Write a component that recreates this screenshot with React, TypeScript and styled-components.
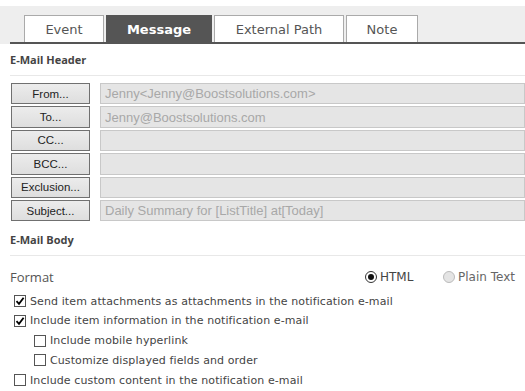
import React from "react";
import styled, { createGlobalStyle } from "styled-components";

const Global = createGlobalStyle`
  body {
    margin: 0;
    background: #fff;
    font-family: "DejaVu Sans", Verdana, sans-serif;
    color: #444;
  }
`;

const Page = styled.div`
  width: 525px;
  overflow: hidden;
  padding-top: 6px;
`;

const TabBand = styled.div`
  background: #eeeeee;
  padding-left: 10px;
`;

const TabStrip = styled.div`
  display: flex;
  gap: 2px;
  padding: 9px 0 0 14px;
  border-bottom: 2px solid #555;
`;

const Tab = styled.div<{ $w: number; $active?: boolean }>`
  width: ${(p) => p.$w}px;
  height: 27px;
  box-sizing: border-box;
  display: flex;
  align-items: center;
  justify-content: center;
  font-size: 13px;
  border: 1px solid ${(p) => (p.$active ? "#555" : "#aaa")};
  border-bottom: none;
  background: ${(p) => (p.$active ? "#555" : "#fff")};
  color: ${(p) => (p.$active ? "#fff" : "#555")};
  font-weight: ${(p) => (p.$active ? "bold" : "normal")};
  padding-top: 1px;
`;

const Section = styled.div`
  padding-left: 10px;
`;

const SectionTitle = styled.div<{ $top: number }>`
  font-family: "Open Sans", sans-serif;
  font-weight: bold;
  font-size: 11px;
  color: #444;
  padding-top: ${(p) => p.$top}px;
  height: 22px;
  border-bottom: 1px solid #e8e8e8;
  line-height: 14px;
`;

const Fields = styled.div`
  display: flex;
  flex-direction: column;
  gap: 2px;
  padding: 7px 0 0 1px;
`;

const FieldRow = styled.div`
  display: flex;
  gap: 10px;
  height: 21.4px;
`;

const PickButton = styled.div`
  width: 79px;
  flex: none;
  box-sizing: border-box;
  border: 1px solid #707070;
  background: linear-gradient(#ececec, #dedede);
  font-family: "Liberation Sans", Arial, sans-serif;
  font-size: 11.5px;
  color: #222;
  display: flex;
  align-items: center;
  justify-content: center;
`;

const FieldInput = styled.div`
  flex: 1;
  box-sizing: border-box;
  border: 1px solid #c8c8c8;
  background: #e5e5e5;
  font-family: "Liberation Sans", Arial, sans-serif;
  font-size: 13px;
  color: #a8a8a8;
  display: flex;
  align-items: center;
  padding-left: 4px;
  white-space: nowrap;
`;

const FormatRow = styled.div`
  display: flex;
  align-items: center;
  height: 20px;
  margin-top: 11px;
`;

const FormatLabel = styled.div`
  font-family: "Open Sans", sans-serif;
  font-size: 13px;
  color: #555;
  flex: 1;
`;

const RadioOption = styled.div<{ $w: number; $disabled?: boolean }>`
  width: ${(p) => p.$w}px;
  display: flex;
  align-items: center;
  gap: 3px;
  font-size: 12px;
  color: ${(p) => (p.$disabled ? "#666" : "#444")};
`;

const RadioDot = styled.span<{ $on?: boolean }>`
  width: 12px;
  height: 12px;
  border-radius: 50%;
  box-sizing: border-box;
  border: 1px solid ${(p) => (p.$on ? "#333" : "#bbb")};
  background: ${(p) => (p.$on ? "#fff" : "#e4e4e4")};
  display: flex;
  align-items: center;
  justify-content: center;
  &::after {
    content: "";
    width: 6px;
    height: 6px;
    border-radius: 50%;
    background: ${(p) => (p.$on ? "#111" : "transparent")};
  }
`;

const Checks = styled.div`
  display: flex;
  flex-direction: column;
  padding-top: 4px;
`;

const CheckRow = styled.div<{ $indent?: boolean }>`
  display: flex;
  align-items: center;
  gap: 4px;
  height: 19.75px;
  padding-left: ${(p) => (p.$indent ? 24 : 4)}px;
  font-size: 11px;
  letter-spacing: 0.1px;
  color: #444;
  white-space: nowrap;
`;

const Box = styled.span`
  width: 12px;
  height: 12px;
  flex: none;
  box-sizing: border-box;
  border: 1px solid #555;
  background: #fff;
  display: flex;
  align-items: center;
  justify-content: center;
`;

const Tick = () => (
  <svg width="10" height="10" viewBox="0 0 10 10">
    <path d="M1.5 5.2 L4 7.8 L8.6 1.8" fill="none" stroke="#000" strokeWidth="1.8" />
  </svg>
);

const Check: React.FC<{ on?: boolean; indent?: boolean; children: React.ReactNode }> = ({ on, indent, children }) => (
  <CheckRow $indent={indent}>
    <Box>{on && <Tick />}</Box>
    {children}
  </CheckRow>
);

const tabs = [
  { label: "Event", w: 80 },
  { label: "Message", w: 106, active: true },
  { label: "External Path", w: 130 },
  { label: "Note", w: 72 },
];

const fields = [
  { btn: "From...", value: "Jenny<Jenny@Boostsolutions.com>" },
  { btn: "To...", value: "Jenny@Boostsolutions.com" },
  { btn: "CC...", value: "" },
  { btn: "BCC...", value: "" },
  { btn: "Exclusion...", value: "" },
  { btn: "Subject...", value: "Daily Summary for [ListTitle] at[Today]" },
];

export default function App() {
  return (
    <Page>
      <Global />
      <TabBand>
        <TabStrip>
          {tabs.map((t) => (
            <Tab key={t.label} $w={t.w} $active={t.active}>
              {t.label}
            </Tab>
          ))}
        </TabStrip>
      </TabBand>
      <Section>
        <SectionTitle $top={9}>E-Mail Header</SectionTitle>
        <Fields>
          {fields.map((f) => (
            <FieldRow key={f.btn}>
              <PickButton>{f.btn}</PickButton>
              <FieldInput>{f.value}</FieldInput>
            </FieldRow>
          ))}
        </Fields>
        <SectionTitle $top={12}>E-Mail Body</SectionTitle>
        <FormatRow>
          <FormatLabel>Format</FormatLabel>
          <RadioOption $w={78}>
            <RadioDot $on />
            HTML
          </RadioOption>
          <RadioOption $w={82} $disabled>
            <RadioDot />
            Plain Text
          </RadioOption>
        </FormatRow>
        <Checks>
          <Check on>Send item attachments as attachments in the notification e-mail</Check>
          <Check on>Include item information in the notification e-mail</Check>
          <Check indent>Include mobile hyperlink</Check>
          <Check indent>Customize displayed fields and order</Check>
          <Check>Include custom content in the notification e-mail</Check>
        </Checks>
      </Section>
    </Page>
  );
}
